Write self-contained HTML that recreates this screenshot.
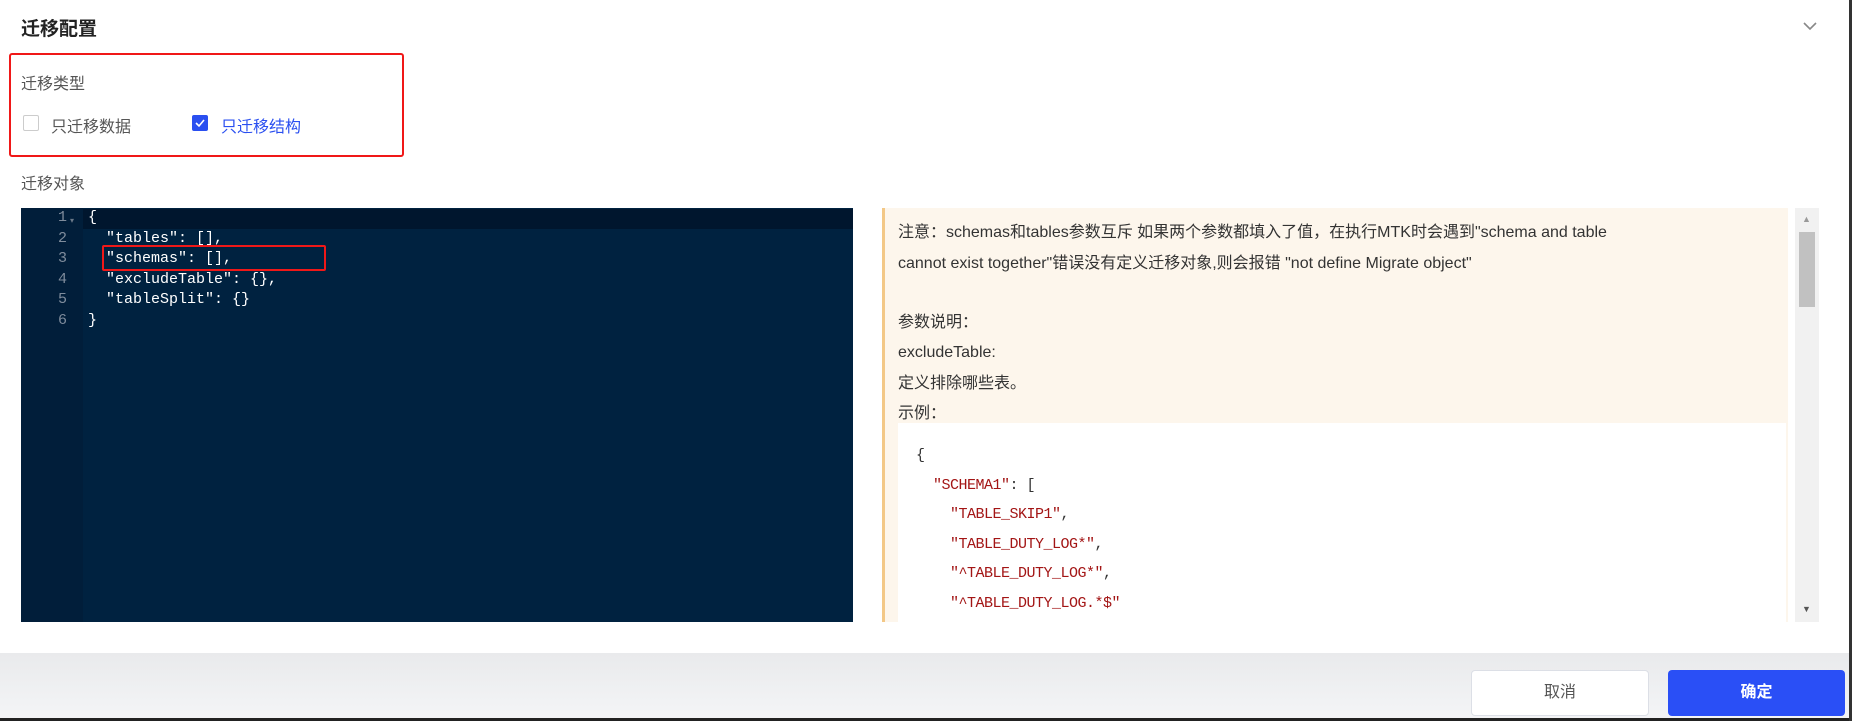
<!DOCTYPE html>
<html><head><meta charset="utf-8"><style>
*{margin:0;padding:0;box-sizing:border-box}
body{width:1852px;height:721px;background:#fff;font-family:"Liberation Sans","Noto Sans CJK SC",sans-serif;position:relative;overflow:hidden;color:#333}
.a{position:absolute}
.mono{font-family:"Liberation Mono","Noto Sans CJK SC",monospace}
</style></head><body>
<div class="a" style="left:21px;top:14px;font-size:19px;font-weight:bold;color:#222">迁移配置</div>
<svg class="a" style="left:1802px;top:20px" width="16" height="12"><path d="M2 3 L8 9 L14 3" stroke="#888" stroke-width="1.6" fill="none"/></svg>
<div class="a" style="left:9px;top:53px;width:395px;height:104px;border:2.5px solid #f01818;border-radius:3px"></div>
<div class="a" style="left:21px;top:70px;font-size:16px;color:#555">迁移类型</div>
<div class="a" style="left:23px;top:115px;width:16px;height:16px;border:1px solid #ccc;border-radius:2px"></div>
<div class="a" style="left:51px;top:113px;font-size:16px;color:#555">只迁移数据</div>
<div class="a" style="left:192px;top:115px;width:16px;height:16px;background:#2a4ff0;border-radius:2px"></div>
<svg class="a" style="left:192px;top:115px" width="16" height="16"><path d="M4 8 L7 11 L12 5" stroke="#fff" stroke-width="1.6" fill="none"/></svg>
<div class="a" style="left:221px;top:113px;font-size:16px;color:#2a4ff0">只迁移结构</div>
<div class="a" style="left:21px;top:170px;font-size:16px;color:#555">迁移对象</div>

<div class="a" style="left:21px;top:208px;width:832px;height:414px;background:#002240"></div>
<div class="a" style="left:21px;top:208px;width:62px;height:414px;background:#011e3a"></div>
<div class="a" style="left:83px;top:209px;width:770px;height:20px;background:#00162e"></div>
<div class="a mono" style="left:21px;top:208px;width:62px;font-size:15px;line-height:20.6px;color:#7f8c9c;text-align:right;padding-right:16px">1<br>2<br>3<br>4<br>5<br>6</div>
<div class="a" style="left:70px;top:216px;font-size:8px;color:#6a7888">▾</div>
<pre class="a mono" style="left:88px;top:208px;font-size:15px;line-height:20.6px;color:#fff">{
  "tables": [],
  "schemas": [],
  "excludeTable": {},
  "tableSplit": {}
}</pre>
<div class="a" style="left:102px;top:245px;width:224px;height:26px;border:2.5px solid #f01818;border-radius:2px"></div>

<div class="a" style="left:882px;top:208px;width:906px;height:414px;background:#fdf6ec;border-left:3px solid #f3c887"></div>
<div class="a" style="left:1795px;top:208px;width:24px;height:414px;background:#f1f1f1"></div>
<div class="a" style="left:1799px;top:232px;width:16px;height:75px;background:#c1c1c1"></div>
<div class="a" style="left:1802px;top:214px;font-size:9px;color:#999">▲</div>
<div class="a" style="left:1802px;top:604px;font-size:9px;color:#555">▼</div>
<div class="a" style="left:898px;top:218px;font-size:16px;line-height:30.5px;color:#333;width:880px">注意：schemas和tables参数互斥 如果两个参数都填入了值，在执行MTK时会遇到"schema and table<br>cannot exist together"错误没有定义迁移对象,则会报错 "not define Migrate object"</div>
<div class="a" style="left:898px;top:308px;font-size:16px;line-height:30.3px;color:#333">参数说明：<br>excludeTable:<br>定义排除哪些表。<br>示例：</div>
<div class="a" style="left:898px;top:423px;width:888px;height:199px;background:#fff"></div>
<pre class="a mono" style="left:916px;top:441px;font-size:15px;line-height:29.5px;color:#333;letter-spacing:-0.5px">{
  <span style="color:#a31515">"SCHEMA1"</span>: [
    <span style="color:#a31515">"TABLE_SKIP1"</span>,
    <span style="color:#a31515">"TABLE_DUTY_LOG*"</span>,
    <span style="color:#a31515">"^TABLE_DUTY_LOG*"</span>,
    <span style="color:#a31515">"^TABLE_DUTY_LOG.*$"</span></pre>

<div class="a" style="left:0;top:653px;width:1852px;height:68px;background:linear-gradient(#e9eaec,#f4f5f7)"></div>
<div class="a" style="left:1471px;top:670px;width:178px;height:46px;background:#fff;border:1px solid #dcdfe6;border-radius:4px;font-size:16px;color:#555;text-align:center;line-height:44px">取消</div>
<div class="a" style="left:1668px;top:670px;width:177px;height:46px;background:#2a4ff6;border-radius:4px;font-size:16px;color:#fff;text-align:center;line-height:46px;font-weight:bold">确定</div>
<div class="a" style="left:0;top:718px;width:1852px;height:3px;background:#222"></div>
<div class="a" style="left:1849px;top:0;width:3px;height:721px;background:#333"></div>
</body></html>
